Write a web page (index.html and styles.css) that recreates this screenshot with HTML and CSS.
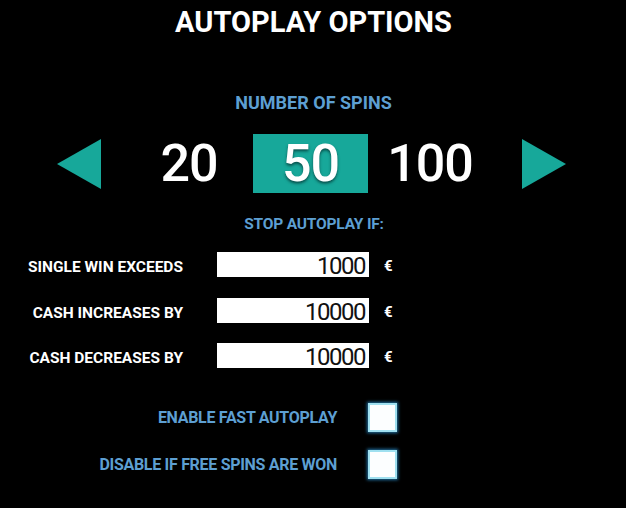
FILE: index.html
```html
<!DOCTYPE html>
<html lang="en">
<head>
<meta charset="utf-8">
<title>Autoplay Options</title>
<link rel="stylesheet" href="styles.css">
</head>
<body>
<div class="panel">
  <h1 class="title">AUTOPLAY OPTIONS</h1>
  <div class="section-label spins-label">NUMBER OF SPINS</div>
  <div class="spinner">
    <svg class="arrow arrow-left" width="44" height="50" viewBox="0 0 44 50"><polygon points="0,25 44,0 44,50" fill="#17a89a"/></svg>
    <div class="count count-20">20</div>
    <div class="count count-active">50</div>
    <div class="count count-100">100</div>
    <svg class="arrow arrow-right" width="44" height="50" viewBox="0 0 44 50"><polygon points="0,0 44,25 0,50" fill="#17a89a"/></svg>
  </div>
  <div class="section-label stop-label">STOP AUTOPLAY IF:</div>
  <div class="limits">
    <div class="limit-label">SINGLE WIN EXCEEDS</div>
    <div class="limit-input">1000</div>
    <div class="currency">€</div>
    <div class="limit-label">CASH INCREASES BY</div>
    <div class="limit-input">10000</div>
    <div class="currency">€</div>
    <div class="limit-label">CASH DECREASES BY</div>
    <div class="limit-input">10000</div>
    <div class="currency">€</div>
  </div>
  <div class="options">
    <div class="option-label">ENABLE FAST AUTOPLAY</div>
    <div class="checkbox"></div>
    <div class="option-label">DISABLE IF FREE SPINS ARE WON</div>
    <div class="checkbox"></div>
  </div>
</div>
</body>
</html>
```
FILE: styles.css
```css
html, body {
  margin: 0;
  padding: 0;
  background: #000;
}
body {
  width: 626px;
  height: 508px;
  overflow: hidden;
  font-family: Roboto, "Liberation Sans", sans-serif;
  font-weight: 700;
  color: #fff;
}
.panel {
  display: flex;
  flex-direction: column;
}
.title {
  margin: 8px 0 0 0;
  font-size: 29px;
  line-height: 29px;
  font-weight: 700;
  text-align: center;
  padding-left: 1px;
}
.section-label {
  color: #5d9fd2;
  text-align: center;
}
.spins-label {
  margin-top: 57px;
  font-size: 18px;
  line-height: 18px;
  padding-left: 1px;
}
.spinner {
  margin-top: 22px;
  height: 59px;
  display: grid;
  grid-template-columns: 44px 24px 128px 115px 124px 30px 44px;
  align-items: center;
  padding-left: 57px;
}
.arrow {
  display: block;
}
.arrow-left { grid-column: 1; }
.count-20 { grid-column: 3; }
.count-active { grid-column: 4; }
.count-100 { grid-column: 5; letter-spacing: -2px; }
.arrow-right { grid-column: 7; }
.count {
  font-size: 52px;
  line-height: 59px;
  height: 59px;
  text-align: center;
  font-weight: 500;
  letter-spacing: -1px;
}
.count-active {
  background: #17a89a;
  text-shadow: 0 2px 3px rgba(0, 40, 40, 0.7);
}
.stop-label {
  margin-top: 23px;
  font-size: 15.5px;
  line-height: 17px;
  padding-left: 2px;
  letter-spacing: -0.2px;
}
.limits {
  margin-top: 19px;
  display: grid;
  grid-template-columns: 183px 186px 40px;
  grid-auto-rows: 25px;
  row-gap: 20.5px;
  align-items: start;
}
.limit-label {
  height: 25px;
  font-size: 15.5px;
  line-height: 30px;
  text-align: right;
}
.limit-input {
  margin-left: 34px;
  width: 152px;
  box-sizing: border-box;
  height: 25px;
  background: #fff;
  color: #111;
  font-weight: 400;
  font-size: 24px;
  line-height: 28px;
  text-align: right;
  padding-right: 4px;
  letter-spacing: -1.5px;
}
.currency {
  height: 25px;
  font-size: 15px;
  line-height: 29px;
  padding-left: 15px;
}
.options {
  margin-top: 35px;
  display: grid;
  grid-template-columns: 337px 29px;
  grid-auto-rows: 29px;
  column-gap: 31px;
  row-gap: 18px;
  align-items: start;
}
.option-label {
  color: #5d9fd2;
  font-size: 16px;
  line-height: 29px;
  height: 29px;
  text-align: right;
  letter-spacing: -0.3px;
}
.checkbox {
  width: 25px;
  height: 25px;
  background: #fcfeff;
  border: 2px solid #9fe0f0;
  box-shadow: 0 0 3px 1px rgba(40, 140, 200, 0.8);
}
```
